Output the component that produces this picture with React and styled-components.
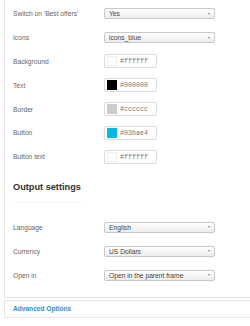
import styled, { createGlobalStyle } from "styled-components";

const GlobalStyle = createGlobalStyle`
    html, body {
        margin: 0;
        padding: 0;
        background: #ffffff;
        font-family: "Liberation Sans", Arial, sans-serif;
    }
`;

const Page = styled.div`
    width: 250px;
    height: 326px;
    overflow: hidden;
`;

const Panel = styled.div`
    margin-left: 4px;
    padding: 2px 0 10px 8px;
    border: 1px solid #e6e6e6;
    border-top: none;
    border-right: none;
    background: #fff;
`;

const Row = styled.div`
    display: flex;
    align-items: center;
    height: 23.8px;
`;

const Label = styled.div`
    width: 91px;
    font-size: 6.7px;
    color: #666;
`;

const Select = styled.div`
    position: relative;
    box-sizing: border-box;
    width: 111px;
    height: 11px;
    padding-left: 4px;
    border: 1px solid #c8c8c8;
    border-radius: 2px;
    background: linear-gradient(#ffffff, #ececec);
    font-size: 6.7px;
    line-height: 9px;
    color: #444;

    &::after {
        content: "";
        position: absolute;
        right: 4px;
        top: 3.5px;
        border-left: 1.5px solid transparent;
        border-right: 1.5px solid transparent;
        border-top: 2px solid #888;
    }
`;

const ColorInput = styled.div`
    display: flex;
    align-items: center;
    box-sizing: border-box;
    width: 53px;
    height: 14px;
    padding-left: 2px;
    border: 1px solid #dcdcdc;
    border-radius: 2px;
    background: #fff;
`;

const Swatch = styled.div`
    width: 10px;
    height: 10px;
    background: ${(p) => p.color};
    border: ${(p) => (p.color === "#ffffff" ? "1px solid #eee" : "none")};
    box-sizing: border-box;
`;

const Hex = styled.span`
    margin-left: 3px;
    font-family: "Liberation Mono", "Courier New", monospace;
    font-size: 6.7px;
    color: #777;
`;

const Heading = styled.h3`
    display: inline-block;
    margin: 13px 0 0;
    padding-bottom: 9px;
    border-bottom: 1px solid #f3f3f3;
    font-size: 9.2px;
    line-height: 11px;
    font-weight: bold;
    color: #333;
`;

const Section = styled.div`
    margin-top: 13px;
`;

const Advanced = styled.div`
    margin: 2px 0 0 4px;
    height: 16px;
    padding-left: 8px;
    display: flex;
    align-items: center;
    border: 1px solid #e6e6e6;
    border-right: none;
    font-size: 6.6px;
    font-weight: bold;
    color: #2d8fd5;
`;

const selects = [
    ["Switch on 'Best offers'", "Yes"],
    ["Icons", "icons_blue"],
];

const colors = [
    ["Background", "#ffffff"],
    ["Text", "#000000"],
    ["Border", "#cccccc"],
    ["Button", "#03bae4"],
    ["Button text", "#ffffff"],
];

const output = [
    ["Language", "English"],
    ["Currency", "US Dollars"],
    ["Open in", "Open in the parent frame"],
];

const App = () => {
    return (
        <Page>
            <GlobalStyle />
            <Panel>
                {selects.map(([label, value]) => (
                    <Row key={label}>
                        <Label>{label}</Label>
                        <Select>{value}</Select>
                    </Row>
                ))}
                {colors.map(([label, value]) => (
                    <Row key={label}>
                        <Label>{label}</Label>
                        <ColorInput>
                            <Swatch color={value} />
                            <Hex>{value}</Hex>
                        </ColorInput>
                    </Row>
                ))}
                <Heading>Output settings</Heading>
                <Section>
                    {output.map(([label, value]) => (
                        <Row key={label}>
                            <Label>{label}</Label>
                            <Select>{value}</Select>
                        </Row>
                    ))}
                </Section>
            </Panel>
            <Advanced>Advanced Options</Advanced>
        </Page>
    );
};

export default App;
